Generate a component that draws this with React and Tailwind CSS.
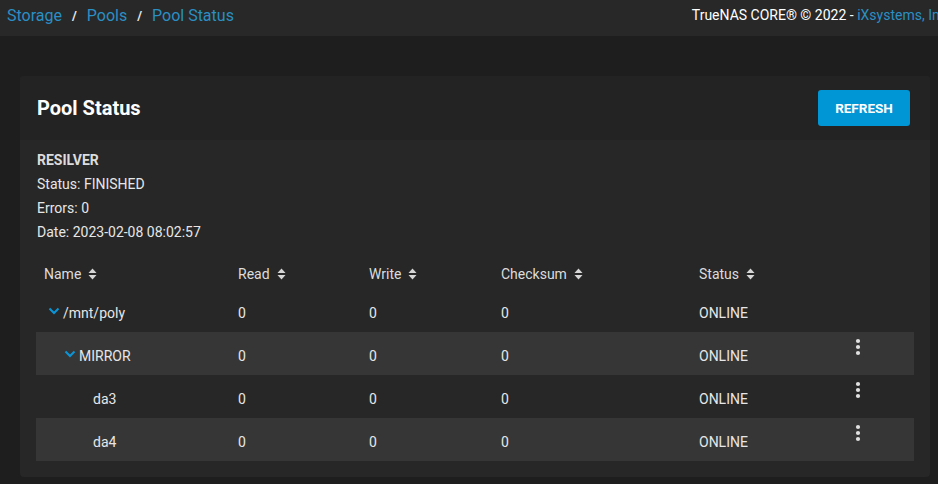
import React from "react";

const SortIcon = () => (
  <svg width="9" height="12" viewBox="0 0 9 12" className="ml-[7px] inline-block">
    <path d="M4.5 0.5 L8.5 5 L0.5 5 Z" fill="#d6d6d6" />
    <path d="M4.5 11.5 L8.5 7 L0.5 7 Z" fill="#d6d6d6" />
  </svg>
);

const Chevron = () => (
  <svg width="12" height="8" viewBox="0 0 12 8" className="mr-[3px] mt-[-4px]">
    <path d="M1.5 1.5 L6 6 L10.5 1.5" stroke="#0b95d6" strokeWidth="2" fill="none" />
  </svg>
);

const Dots = () => (
  <svg width="6" height="18" viewBox="0 0 6 18">
    <circle cx="3" cy="3" r="2.1" fill="#e0e0e0" />
    <circle cx="3" cy="9" r="2.1" fill="#e0e0e0" />
    <circle cx="3" cy="15" r="2.1" fill="#e0e0e0" />
  </svg>
);

const rows = [
  { name: "/mnt/poly", indent: "pl-[12px]", chevron: true, striped: false, menu: false },
  { name: "MIRROR", indent: "pl-[28px]", chevron: true, striped: true, menu: true },
  { name: "da3", indent: "pl-[57px]", chevron: false, striped: false, menu: true },
  { name: "da4", indent: "pl-[57px]", chevron: false, striped: true, menu: true },
];

export default function App() {
  return (
    <div
      className="w-[938px] h-[484px] bg-[#1e1e1e] overflow-hidden text-[#e4e4e4]"
      style={{ fontFamily: "Roboto, 'Liberation Sans', sans-serif" }}
    >
      <div className="h-[36px] bg-[#282828] flex items-center overflow-hidden">
        <div className="flex items-center pl-[7px] text-[16px] text-[#2a8fc4] pb-[5px]">
          <span>Storage</span>
          <span className="text-[#e8e8e8] text-[13px] font-bold mx-[10px]">/</span>
          <span>Pools</span>
          <span className="text-[#e8e8e8] text-[13px] font-bold mx-[10px]">/</span>
          <span>Pool Status</span>
        </div>
        <div className="flex-1" />
        <div className="whitespace-nowrap shrink-0 text-[14px] text-white mr-[-9px] pb-[5px]">
          TrueNAS CORE® © 2022 - <span className="text-[#2a8fc4]">iXsystems, Inc</span>
        </div>
      </div>

      <div className="pt-[40px] px-[20px]">
        <div className="w-[910px] rounded-[4px] bg-[#272727] overflow-hidden">
          <div className="h-[64px] bg-[#232323] flex items-center justify-between pl-[17px] pr-[20px]">
            <div className="text-[20px] font-bold text-white">Pool Status</div>
            <button className="h-[36px] w-[92px] rounded-[3px] bg-[#0095d5] text-white text-[13.5px] font-bold">
              REFRESH
            </button>
          </div>

          <div className="pl-[17px] pt-[8px] text-[14px] leading-[24px] text-[#e6e6e6]">
            <div className="font-bold text-[#dcdcdc]">RESILVER</div>
            <div>Status: FINISHED</div>
            <div>Errors: 0</div>
            <div>Date: 2023-02-08 08:02:57</div>
          </div>

          <div className="mx-[16px] mt-[13px] mb-[16px] text-[14px] text-[#e6e6e6]">
            <div className="h-[32px] pt-[2px] flex items-center text-[#dcdcdc]">
              <div className="w-[202px] pl-[8px] flex items-center">Name<SortIcon /></div>
              <div className="w-[131px] flex items-center">Read<SortIcon /></div>
              <div className="w-[132px] flex items-center">Write<SortIcon /></div>
              <div className="w-[198px] flex items-center">Checksum<SortIcon /></div>
              <div className="flex items-center">Status<SortIcon /></div>
            </div>
            {rows.map((r) => (
              <div
                key={r.name}
                className={`h-[43px] pt-[5px] flex items-center ${r.striped ? "bg-[#363636]" : ""}`}
              >
                <div className={`w-[202px] flex items-center ${r.indent}`}>
                  {r.chevron && <Chevron />}
                  <span>{r.name}</span>
                </div>
                <div className="w-[131px]">0</div>
                <div className="w-[132px]">0</div>
                <div className="w-[198px]">0</div>
                <div className="w-[152px]">ONLINE</div>
                <div className="w-[14px] flex justify-center mt-[-18px]">{r.menu && <Dots />}</div>
              </div>
            ))}
          </div>
        </div>
      </div>
    </div>
  );
}
